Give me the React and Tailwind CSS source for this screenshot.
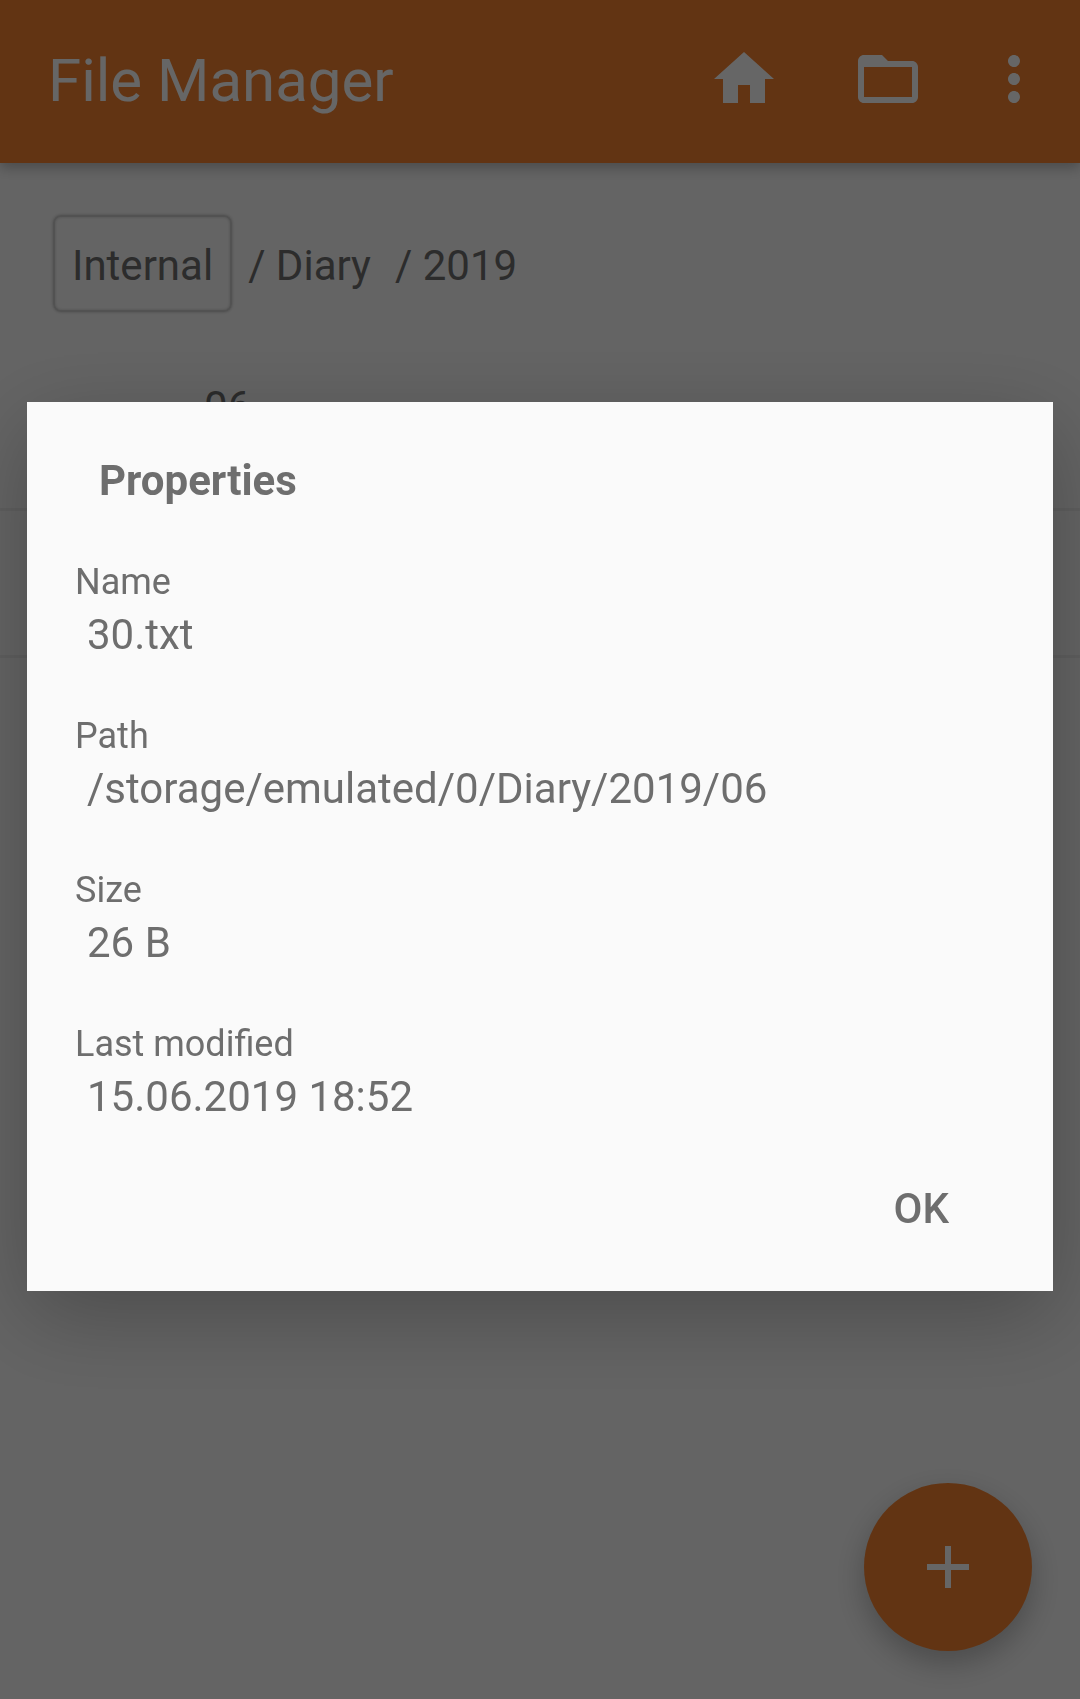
const details = [
  { label: "Name", value: "30.txt" },
  { label: "Path", value: "/storage/emulated/0/Diary/2019/06" },
  { label: "Size", value: "26 B" },
  { label: "Last modified", value: "15.06.2019 18:52" },
];

function Icon({ d }) {
  return (
    <svg viewBox="0 0 24 24" className="size-[72px] fill-current" aria-hidden="true">
      <path d={d} />
    </svg>
  );
}

function Header() {
  return (
    <header className="relative flex h-[163px] items-center bg-[#f58230] pr-[30px] pb-[5px] pl-12 text-white shadow-[0_5px_12px_rgba(0,0,0,0.25)]">
      <h1 className="flex-1 pt-1 text-[60px] leading-[70px]">File Manager</h1>
      <div className="flex items-center">
        <button type="button" aria-label="Home" className="mr-[72px]">
          <Icon d="M10 20v-6h4v6h5v-8h3L12 3 2 12h3v8z" />
        </button>
        <button type="button" aria-label="Folders" className="mr-[54px]">
          <Icon d="M20 6h-8l-2-2H4c-1.1 0-1.99.9-1.99 2L2 18c0 1.1.9 2 2 2h16c1.1 0 2-.9 2-2V8c0-1.1-.9-2-2-2zm0 12H4V8h16v10z" />
        </button>
        <button type="button" aria-label="More options">
          <Icon d="M12 8c1.1 0 2-.9 2-2s-.9-2-2-2-2 .9-2 2 .9 2 2 2zm0 2c-1.1 0-2 .9-2 2s.9 2 2 2 2-.9 2-2-.9-2-2-2zm0 6c-1.1 0-2 .9-2 2s.9 2 2 2 2-.9 2-2-.9-2-2-2z" />
        </button>
      </div>
    </header>
  );
}

function Breadcrumbs() {
  return (
    <nav aria-label="Path" className="flex items-center px-[53px] py-[52px]">
      <button
        type="button"
        className="h-[97px] rounded-lg border-2 border-[#cccccc] px-[17px] pt-1 shadow-[0_0_3px_rgba(0,0,0,0.25),inset_0_0_3px_rgba(0,0,0,0.2)]"
      >
        Internal
      </button>
      <a href="#diary" className="ml-4 pt-1">/ Diary</a>
      <a href="#2019" className="ml-6 pt-1">/ 2019</a>
    </nav>
  );
}

function FileList() {
  return (
    <ul>
      <li className="h-[147px] border-b-[3px] border-[#ececec] pt-[18px] pl-[204px]">06</li>
      <li className="h-[147px] border-b-[3px] border-[#ececec]" />
    </ul>
  );
}

function PropertiesDialog() {
  return (
    <div className="fixed inset-0 flex items-center justify-center bg-black/60 px-[27px] pb-[6px]">
      <section
        role="dialog"
        aria-modal="true"
        aria-labelledby="dialog-title"
        className="flex w-full flex-col bg-[#fafafa] px-12 pt-[54px] pb-[58px] shadow-[0_24px_84px_rgba(0,0,0,0.25)]"
      >
        <h2 id="dialog-title" className="ml-6 font-bold">Properties</h2>
        <dl className="mt-14 flex flex-col gap-14">
          {details.map(({ label, value }) => (
            <div key={label}>
              <dt className="text-[36px] leading-[42px]">{label}</dt>
              <dd className="mt-[7px] ml-3">{value}</dd>
            </div>
          ))}
        </dl>
        <button type="button" className="mt-[63px] mr-14 self-end font-medium">OK</button>
      </section>
    </div>
  );
}

export default function App() {
  return (
    <div className="min-h-screen bg-[#fafafa] font-['Roboto',sans-serif] text-[42px] leading-[49px] text-[#6e6e6e]">
      <Header />
      <main>
        <Breadcrumbs />
        <FileList />
      </main>
      <button
        type="button"
        aria-label="Add"
        className="fixed right-12 bottom-12 flex size-[168px] items-center justify-center rounded-full bg-[#f58230] text-white shadow-[0_12px_30px_rgba(0,0,0,0.25)]"
      >
        <Icon d="M19 13h-6v6h-2v-6H5v-2h6V5h2v6h6v2z" />
      </button>
      <PropertiesDialog />
    </div>
  );
}
